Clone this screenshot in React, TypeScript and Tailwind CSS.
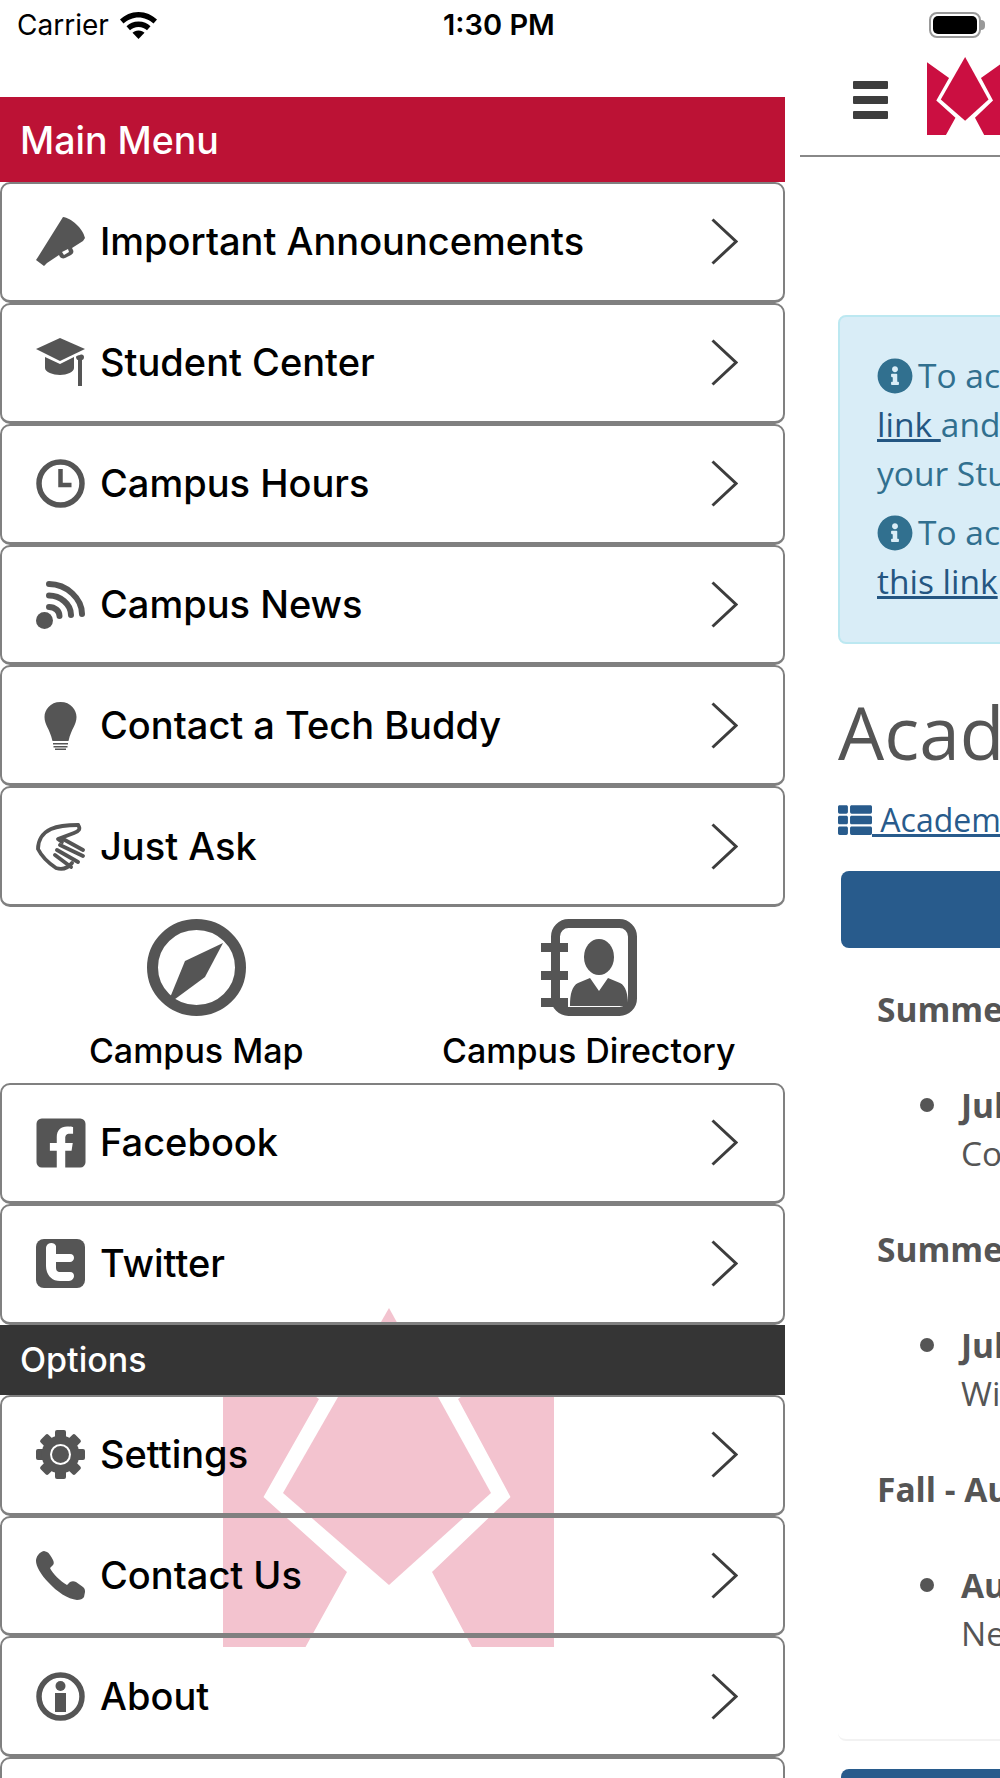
import React from "react";
import { FaFacebookSquare, FaInfoCircle, FaThList } from "react-icons/fa";

const Megaphone = () => (
  <svg viewBox="0 0 49 49" className="h-[49px] w-[49px]" fill="#555">
    <path d="M27 0c8 1 20 11 22 21l-2 3-11 7 1 2c1 2 0 4-2 5l-6 3c-2 1-4 0-5-1l-1-2-12 8-3 3-8-6 2-3z" />
    <path d="M26 35l6-3 1 3-5 3z" fill="#fff" />
  </svg>
);

const GradCap = () => (
  <svg viewBox="0 0 49 49" className="h-[49px] w-[49px]" fill="#555">
    <path d="M24 0l25 11-25 12L0 11z" />
    <path d="M9 19l15 7 14-7v11c0 4-7 7-14 7S9 34 9 30z" />
    <path d="M44 17c2-1 4 0 4 2s-1 3-2 3v26h-4V22c-1 0-2-2-2-3s2-2 4-2z" />
  </svg>
);

const Clock = () => (
  <svg viewBox="0 0 49 49" className="h-[49px] w-[49px]" fill="none" stroke="#555">
    <circle cx="24.5" cy="24.5" r="21.5" strokeWidth="5.5" />
    <path d="M24.5 10v16h11" strokeWidth="4.5" />
  </svg>
);

const Rss = () => (
  <svg viewBox="0 0 49 49" className="h-[49px] w-[49px]">
    <circle cx="8.500" cy="40.500" r="8.500" fill="#555" />
    <g fill="none" stroke="#555" strokeWidth="6" strokeLinecap="round">
      <path d="M13 4C31 4 46 19 46 34" />
      <path d="M13 15.500C24 15.500 35 24 35 35" />
      <path d="M13 27C19 27 23.500 31 23.500 36" />
    </g>
  </svg>
);

const Bulb = () => (
  <svg viewBox="0 0 49 49" className="h-[49px] w-[49px]" fill="#555">
    <path d="M24.500 1C14 1 8.500 9 8.500 16c0 8 5 11 8 24h16c3-13 8-16 8-24 0-7-5.500-15-16-15z" />
    <path d="M17 42h15v1.500H17zM17.500 45h14v1.500h-14zM19 47.500h11V49H19z" />
  </svg>
);

const Hand = () => (
  <svg viewBox="0 0 49 49" className="h-[49px] w-[49px]" fill="none" stroke="#555" strokeWidth="3.800" strokeLinecap="round" strokeLinejoin="round">
    <path d="M42 3C30 3 22 4 15 7 6 11 2 19 2 27c4 8 12 15 18 19 6 2 12 0 16-5" />
    <path d="M42 3c3 4 1 6-4 8l-16 6 4 3" />
    <path d="M27 17l20 11M24 23l23 11M21 28l21 12M19 33l16 12" />
  </svg>
);

const Gear = () => (
  <svg viewBox="0 0 49 49" className="h-[49px] w-[49px]">
    <g fill="#555">
      {[0, 45, 90, 135, 180, 225, 270, 315].map((deg) => (
        <rect key={deg} x="19" y="0" width="11" height="12" rx="2" transform={`rotate(${deg} 24.5 24.5)`} />
      ))}
      <circle cx="24.500" cy="24.500" r="19" />
    </g>
    <circle cx="24.500" cy="24.500" r="10.500" fill="#fff" />
    <circle cx="24.500" cy="24.500" r="8.500" fill="#555" />
  </svg>
);

const Phone = () => (
  <svg viewBox="0 0 49 49" className="h-[49px] w-[49px]" fill="#555">
    <path d="M8 0l3 1c2 1 4 4 6 8 1 2 1 4 0 5l-3 3c2 5 11 14 17 17l3-3c2-1 4-1 6 0l7 5c2 2 2 3 2 5l-1 5c-1 2-4 3-7 3-9-1-20-8-29-18C5 24 0 15 0 10c0-4 3-9 8-10z" />
  </svg>
);

const About = () => (
  <svg viewBox="0 0 49 49" className="h-[49px] w-[49px]">
    <circle cx="24.500" cy="24.500" r="21.500" fill="none" stroke="#555" strokeWidth="5.500" />
    <circle cx="24.500" cy="14" r="5" fill="#555" />
    <rect x="19" y="21" width="11" height="19" fill="#555" />
  </svg>
);

const TwitterBox = () => (
  <svg viewBox="0 0 49 49" className="h-[49px] w-[49px]">
    <rect width="49" height="49" rx="8" fill="#555" />
    <path d="M12 5c3-2 7-1 8 2v8h14c3 0 4 2 4 4s-2 4-4 4H20v6c0 3 2 4 4 4h10c3 0 4 2 4 4s-2 5-5 5H24C15 42 10 35 10 27V9c0-2 1-3 2-4z" fill="#fff" />
  </svg>
);

const Chevron = () => (
  <svg viewBox="0 0 27 47" className="h-[47px] w-[27px]" fill="none" stroke="#3d3d3d" strokeWidth="3">
    <path d="M1.500 1.500L25 23.500 1.500 45.500" />
  </svg>
);

const Compass = () => (
  <svg viewBox="0 0 99 97" className="h-[97px] w-[99px]">
    <ellipse cx="49.500" cy="48.500" rx="44" ry="43" fill="none" stroke="#555" strokeWidth="11" />
    <path d="M76 24L58 58 20 86 38 42z" fill="#555" />
  </svg>
);

const AddressBook = () => (
  <svg viewBox="0 0 96 97" className="h-[97px] w-[96px]">
    <rect x="14.500" y="4.500" width="77" height="88" rx="13" fill="#fff" stroke="#555" strokeWidth="9" />
    <g fill="#555">
      <rect x="0" y="24" width="27" height="9" />
      <rect x="0" y="52" width="27" height="9" />
      <rect x="0" y="79" width="27" height="9" />
      <ellipse cx="58" cy="38" rx="15" ry="18" />
      <path d="M29 87c0-12 2-20 8-23l12-5 9 13 9-13 12 5c6 3 8 11 8 23z" />
    </g>
  </svg>
);

const LogoMark = ({ color, className }: { color: string; className: string }) => (
  <svg viewBox="0 0 331 339" className={className} fill={color}>
    <path d="M0 23L96 91 40.500 189 124 264 82.500 339H0z" />
    <path d="M331 23L235 91 287.500 189 209 264 249 339H331z" />
    <path d="M166 0L268 185 166 277 60 185z" />
  </svg>
);

const mainItems = [
  { label: "Important Announcements", icon: <Megaphone /> },
  { label: "Student Center", icon: <GradCap /> },
  { label: "Campus Hours", icon: <Clock /> },
  { label: "Campus News", icon: <Rss /> },
  { label: "Contact a Tech Buddy", icon: <Bulb /> },
  { label: "Just Ask", icon: <Hand /> },
];

const socialItems = [
  { label: "Facebook", icon: <FaFacebookSquare size={56} color="#555" className="-m-[3.500px]" /> },
  { label: "Twitter", icon: <TwitterBox /> },
];

const optionItems = [
  { label: "Settings", icon: <Gear /> },
  { label: "Contact Us", icon: <Phone /> },
  { label: "About", icon: <About /> },
];

function MenuRow({ label, icon }: { label: string; icon?: React.ReactNode }) {
  return (
    <div className="relative flex h-[120.85px] items-center rounded-[10px] border-2 border-b-[3px] border-[#808080] pl-[34px] pr-[45px]">
      <div className="flex h-[49px] w-[49px] items-center justify-center">{icon}</div>
      <span className="ml-[15px] flex-1 text-[38px] font-[550] text-black">{label}</span>
      {icon && <Chevron />}
    </div>
  );
}

function Schedule({ title, date, text }: { title: string; date: string; text: string }) {
  return (
    <div className="h-[240px]">
      <p className="ml-[77px] whitespace-nowrap font-bold">{title}</p>
      <div className="ml-[120px] mt-[48px] flex">
        <span className="mt-[17px] h-[14px] w-[14px] shrink-0 rounded-full bg-[#555]" />
        <div className="ml-[27px]">
          <p className="whitespace-nowrap font-bold">{date}</p>
          <p className="whitespace-nowrap">{text}</p>
        </div>
      </div>
    </div>
  );
}

export default function App() {
  return (
    <div className="h-[1778px] w-[1000px] overflow-hidden bg-white font-['Inter',sans-serif]">
      <div className="flex h-[50px] items-center">
        <span className="ml-[17px] w-[93px] text-[28px] text-black">Carrier</span>
        <svg viewBox="0 0 37 27" className="ml-[10px] h-[27px] w-[37px]">
          <path d="M18.500 0C11 0 5 3 0 7.500l3.500 4C7.500 8 13 5.500 18.500 5.500s11 2.500 15 6l3.500-4C32 3 26 0 18.500 0z" />
          <path d="M18.500 9.500c-5 0-9 2-12 4.800l3.500 4c2-2 5-3.300 8.500-3.300s6.500 1.300 8.500 3.300l3.500-4c-3-2.800-7-4.800-12-4.800z" />
          <path d="M18.500 18.500c-2.700 0-4.800 1-6 2.300l6 6.200 6-6.200c-1.200-1.300-3.300-2.300-6-2.300z" />
        </svg>
        <span className="ml-[286px] w-[114px] whitespace-nowrap text-[29px] font-semibold text-black">1:30 PM</span>
        <div className="ml-[372px] h-[26px] w-[52px] rounded-[8px] border-2 border-[#999] p-[2px]">
          <div className="h-full w-full rounded-[5px] bg-black" />
        </div>
        <div className="h-[10px] w-[4px] rounded-r-full bg-[#999]" />
      </div>

      <div className="flex">
        <aside className="relative mt-[47px] w-[785px] shrink-0">
          <LogoMark color="#f3c3cf" className="absolute left-[223px] top-[1211px] h-[339px] w-[331px]" />
          <div className="relative flex h-[85px] items-center bg-[#bc1235] pl-[20px] pt-[3px] text-[37.500px] font-medium text-white">
            Main Menu
          </div>
          {mainItems.map((item) => (
            <MenuRow key={item.label} {...item} />
          ))}
          <div className="relative grid h-[176px] grid-cols-2 text-center text-[34px] font-[550] text-black">
            <div className="flex flex-col items-center pt-[12px]">
              <Compass />
              <span className="mt-[9px]">Campus Map</span>
            </div>
            <div className="flex flex-col items-center pt-[12px]">
              <AddressBook />
              <span className="mt-[9px]">Campus Directory</span>
            </div>
          </div>
          {socialItems.map((item) => (
            <MenuRow key={item.label} {...item} />
          ))}
          <div className="relative flex h-[70px] items-center bg-[#353535] pl-[20px] text-[34px] font-medium text-white">
            Options
          </div>
          {optionItems.map((item) => (
            <MenuRow key={item.label} {...item} />
          ))}
          <MenuRow label="" />
        </aside>

        <main className="ml-[15px] min-w-0 flex-1 overflow-hidden font-['Open_Sans',sans-serif] text-[33.500px] leading-[48px] text-[#555]">
          <header className="flex h-[107px] items-start border-b-2 border-[#888]">
            <div className="ml-[53px] mt-[31px] flex w-[35px] shrink-0 flex-col gap-[7px]">
              <span className="h-[8px] rounded-[1px] bg-[#3d3d3d]" />
              <span className="h-[8px] rounded-[1px] bg-[#3d3d3d]" />
              <span className="h-[8px] rounded-[1px] bg-[#3d3d3d]" />
            </div>
            <LogoMark color="#cb0f41" className="ml-[39px] mt-[7px] h-[78px] w-[76px] shrink-0" />
          </header>

          <div className="ml-[38px] mt-[158px] h-[329px] w-[400px] rounded-[8px] border-2 border-[#bce8f1] bg-[#d9edf7] pl-[37px] pt-[34px] leading-[49px] text-[#31708f]">
            <p className="flex items-center whitespace-nowrap">
              <FaInfoCircle size={36} className="mr-[5px] shrink-0" />
              To access
            </p>
            <p className="whitespace-nowrap">
              <span className="text-[#245682] underline">link </span>and
            </p>
            <p className="whitespace-nowrap">your Student</p>
            <p className="mt-[10px] flex items-center whitespace-nowrap">
              <FaInfoCircle size={36} className="mr-[5px] shrink-0" />
              To access
            </p>
            <p className="whitespace-nowrap text-[#245682] underline">this link</p>
          </div>

          <h1 className="ml-[38px] mt-[34px] whitespace-nowrap text-[73px] leading-[108px]">Academic</h1>
          <p className="ml-[38px] mt-[10px] flex items-center whitespace-nowrap text-[32px] text-[#285b8c]">
            <FaThList size={34} className="shrink-0" />
            <span className="underline">&nbsp;Academic</span>
          </p>
          <div className="ml-[41px] mt-[27px] h-[77px] w-[300px] rounded-[8px] bg-[#285b8c]" />
          <div className="ml-[38px] w-[300px] rounded-b-[8px] border-b-2 border-[#f2f2f2] pb-[34px]">
            <div className="-ml-[38px] w-[400px] pt-[37px]">
              <Schedule title="Summer" date="July" text="Co" />
              <Schedule title="Summer" date="July" text="Wi" />
              <Schedule title="Fall - Aug" date="Aug" text="Ne" />
            </div>
          </div>
          <div className="ml-[41px] mt-[28px] h-[77px] w-[300px] rounded-[8px] bg-[#285b8c]" />
        </main>
      </div>
    </div>
  );
}
